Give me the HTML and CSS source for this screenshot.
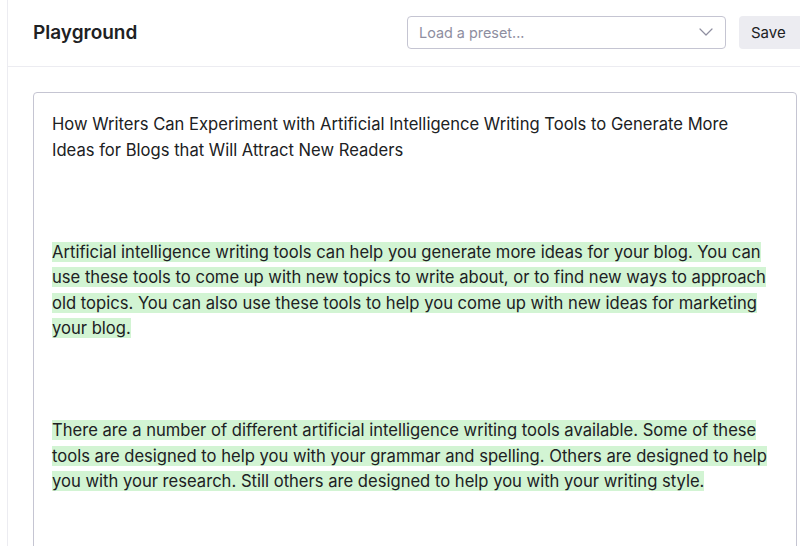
FILE: index.html
```html
<!DOCTYPE html>
<html>
<head>
<meta charset="utf-8"/>
<title>Playground</title>
<link rel="stylesheet" href="styles.css">
</head>
<body>
<div class="page">
  <header class="topbar">
    <h1 class="title">Playground</h1>
    <div class="actions">
      <div class="preset">
        <span class="preset-text">Load a preset...</span>
        <svg class="chevron" width="14" height="8" viewBox="0 0 14 8" fill="none">
          <path d="M1 1l6 6 6-6" stroke="#8e8ea0" stroke-width="1.2" stroke-linecap="round" stroke-linejoin="round"/>
        </svg>
      </div>
      <button class="save">Save</button>
    </div>
  </header>

  <main class="editor">
    <div class="prompt">
      <p>How Writers Can Experiment with Artificial Intelligence Writing Tools to Generate More<br>Ideas for Blogs that Will Attract New Readers</p>
      <p class="blank"></p>
      <p><span class="gen">Artificial intelligence writing tools can help you generate more ideas for your blog. You can<br>use these tools to come up with new topics to write about, or to find new ways to approach<br>old topics. You can also use these tools to help you come up with new ideas for marketing<br>your blog.</span></p>
      <p class="blank"></p>
      <p><span class="gen">There are a number of different artificial intelligence writing tools available. Some of these<br>tools are designed to help you with your grammar and spelling. Others are designed to help<br>you with your research. Still others are designed to help you with your writing style.</span></p>
    </div>
  </main>
</div>
</body>
</html>
```

FILE: styles.css
```css
html, body {
  margin: 0;
  padding: 0;
  background: white;
  height: 100%;
  overflow: hidden;
}

body {
  font-family: Inter, "Noto Sans", sans-serif;
  color: #202123;
}

.page {
  margin-left: 7px;
  border-left: 1px solid #ececf1;
  min-height: 100%;
}

.topbar {
  display: flex;
  align-items: center;
  justify-content: space-between;
  height: 66px;
  border-bottom: 1px solid #ececf1;
  padding-left: 25px;
}

.title {
  margin: 0;
  font-size: 19px;
  font-weight: 600;
  color: #202123;
  margin-top: -2px;
}

.actions {
  display: flex;
  align-items: center;
  gap: 13px;
  margin-right: -12px;
  margin-top: -2px;
}

.preset {
  height: 31px;
  border: 1px solid #c5c5d2;
  border-radius: 4px;
  display: flex;
  align-items: center;
  justify-content: space-between;
  padding: 0 12px 0 11px;
  width: 294px;
}

.preset-text {
  font-size: 14.4px;
  color: #8e8ea0;
}

.chevron {
  display: block;
}

.save {
  font-family: inherit;
  font-size: 15px;
  color: #202123;
  background: #ececf1;
  border: none;
  border-radius: 4px;
  height: 33px;
  padding: 0 12px;
  width: 73px;
  text-align: left;
}

.editor {
  padding: 25px 3px 0 25px;
}

.prompt {
  border: 1px solid #c5c5d2;
  border-radius: 4px;
  padding: 19px 10px 0 18px;
  height: 600px;
  font-size: 16.6px;
  line-height: 25.5px;
  white-space: nowrap;
}

.prompt p {
  margin: 0;
}

.prompt .blank {
  height: 76.5px;
}

.gen {
  background: #d2f4d3;
}
```
